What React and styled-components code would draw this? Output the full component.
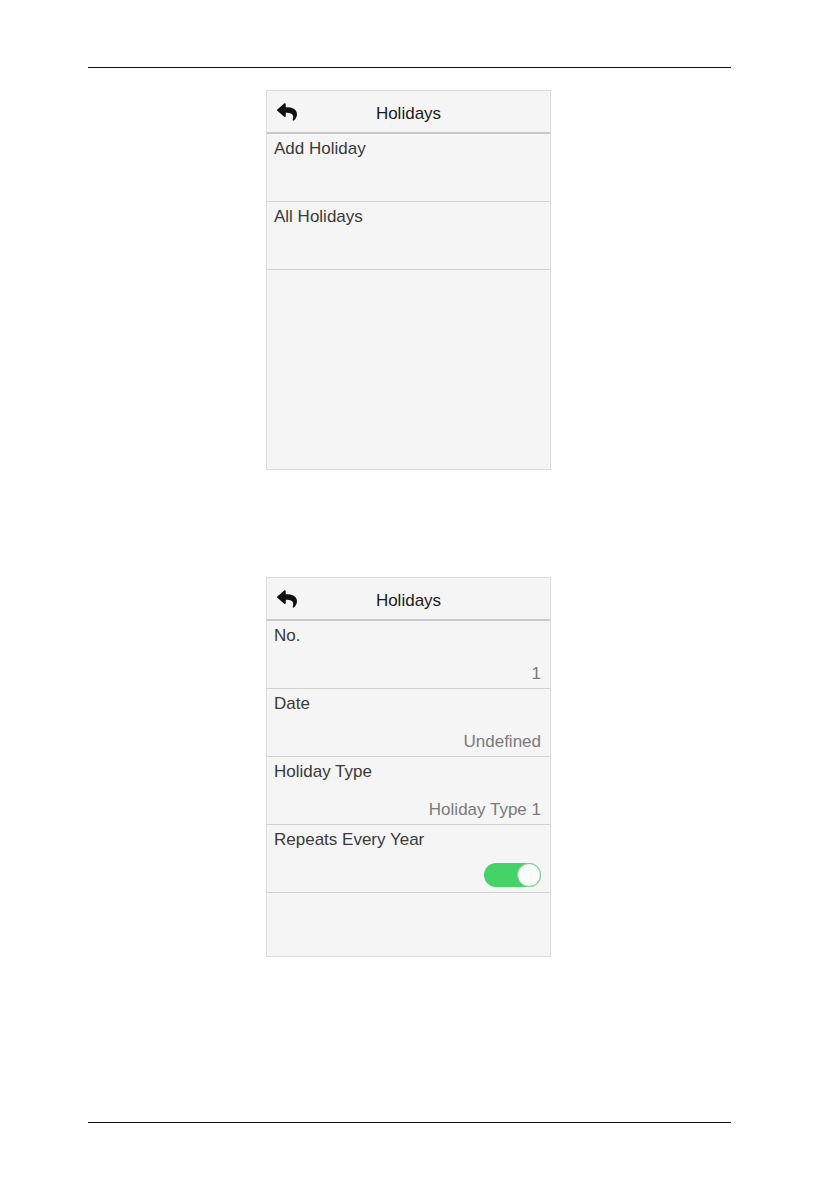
import styled, { createGlobalStyle } from 'styled-components'
import { FaReply } from 'react-icons/fa'

const GlobalStyle = createGlobalStyle`
  body {
    margin: 0;
    background: #ffffff;
    font-family: "Liberation Sans", Arial, sans-serif;
  }
`

const Page = styled.div`
  width: 839px;
  height: 1191px;
  display: flex;
  flex-direction: column;
  padding-top: 67px;
  box-sizing: border-box;
`

const Rule = styled.div`
  margin-left: 88px;
  width: 643px;
  border-top: 1.5px solid #111;
  margin-top: ${({ $top }) => $top || 0}px;
`

const Panel = styled.div`
  margin-left: 266px;
  margin-top: ${({ $top }) => $top}px;
  width: 285px;
  height: 380px;
  box-sizing: border-box;
  border: 1px solid #dcdcdc;
  background: #f5f5f5;
  display: flex;
  flex-direction: column;
`

const Header = styled.div`
  height: 41px;
  flex-shrink: 0;
  border-bottom: 2px solid #c9c9c9;
  display: grid;
  grid-template-columns: 1fr auto 1fr;
  align-items: center;
  padding-left: 10px;
`

const Back = styled.div`
  display: flex;
  align-items: center;
  color: #111;
  padding-top: 1px;
`

const Title = styled.div`
  font-size: 17px;
  color: #1a1a1a;
  padding-top: 4px;
  margin-left: -10px;
`

const Row = styled.div`
  height: 68px;
  flex-shrink: 0;
  border-bottom: 1px solid #d2d2d2;
  display: flex;
  flex-direction: column;
  justify-content: space-between;
  padding: 5px 9px 4px 7px;
  box-sizing: border-box;
`

const Label = styled.div`
  font-size: 17px;
  line-height: 20px;
  color: #3a3a3a;
`

const Value = styled.div`
  align-self: flex-end;
  font-size: 17px;
  line-height: 20px;
  color: #7a7a7a;
`

const Toggle = styled.div`
  align-self: flex-end;
  width: 57px;
  height: 24px;
  border-radius: 12px;
  background: #45d267;
  display: flex;
  justify-content: ${({ $on }) => ($on ? 'flex-end' : 'flex-start')};
  margin-bottom: 1px;
`

const Knob = styled.div`
  width: 22px;
  height: 22px;
  border-radius: 50%;
  background: #fbfbfb;
  border: 1px solid #7fc98f;
`

function Screen({ top, rows }) {
  return (
    <Panel $top={top}>
      <Header>
        <Back>
          <FaReply size={20} />
        </Back>
        <Title>Holidays</Title>
        <div />
      </Header>
      {rows.map((r) => (
        <Row key={r.label}>
          <Label>{r.label}</Label>
          {r.toggle ? (
            <Toggle $on>
              <Knob />
            </Toggle>
          ) : (
            <Value>{r.value}</Value>
          )}
        </Row>
      ))}
    </Panel>
  )
}

export default function App() {
  return (
    <Page>
      <GlobalStyle />
      <Rule />
      <Screen
        top={22}
        rows={[
          { label: 'Add Holiday', value: '' },
          { label: 'All Holidays', value: '' },
        ]}
      />
      <Screen
        top={107}
        rows={[
          { label: 'No.', value: '1' },
          { label: 'Date', value: 'Undefined' },
          { label: 'Holiday Type', value: 'Holiday Type 1' },
          { label: 'Repeats Every Year', toggle: true },
        ]}
      />
      <Rule $top={165} />
    </Page>
  )
}
